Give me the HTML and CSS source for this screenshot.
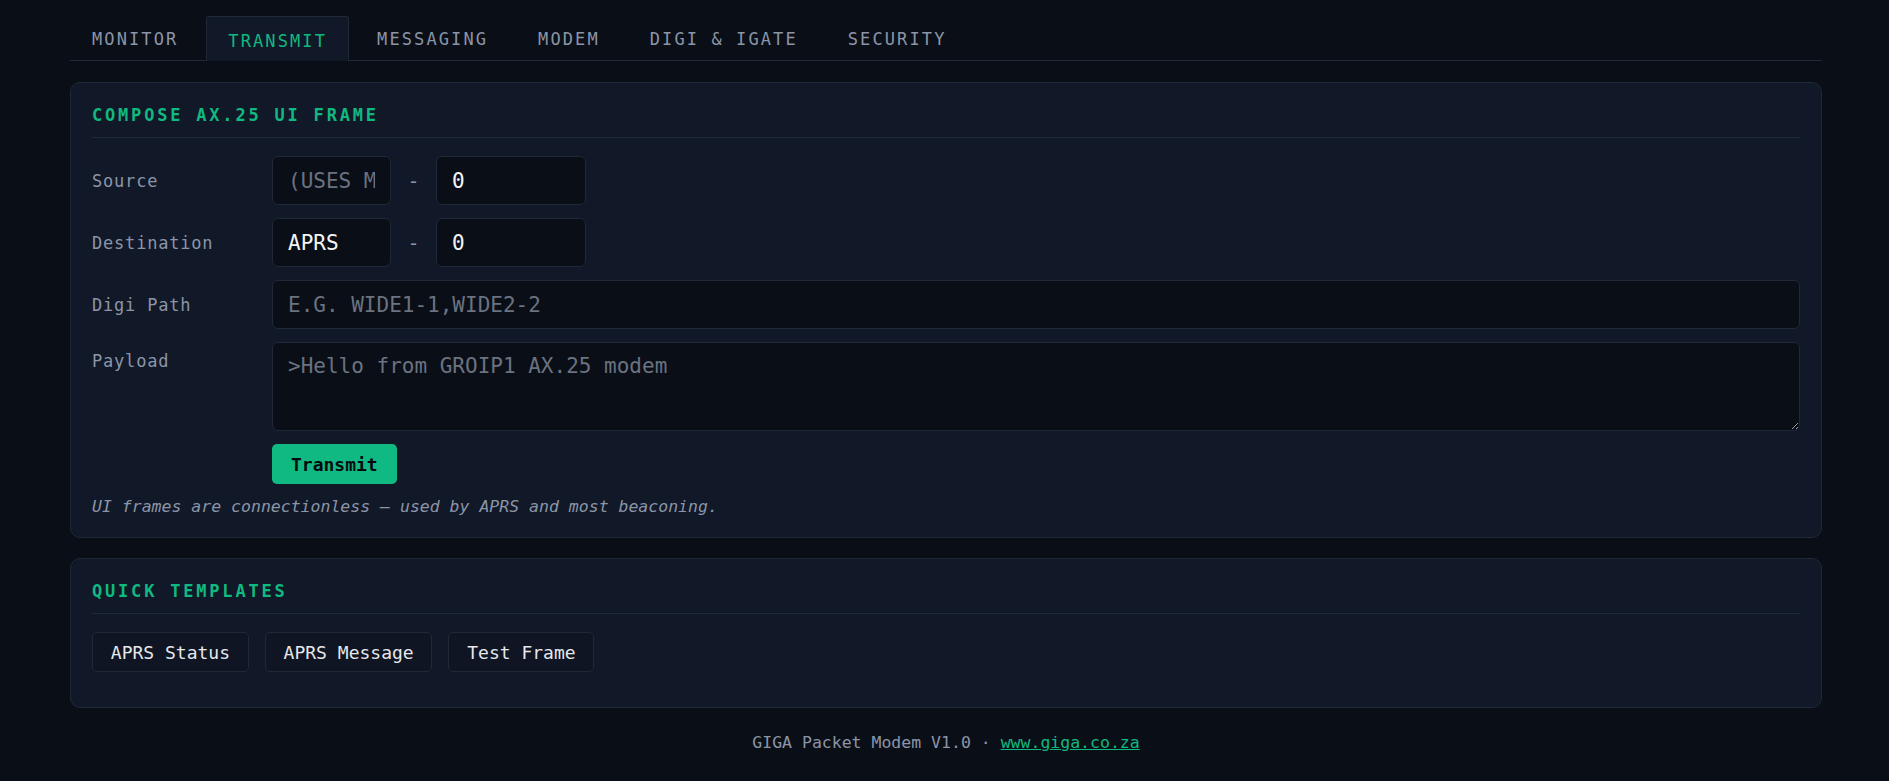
FILE: index.html
```html
<!DOCTYPE html>
<html lang="en">
<head>
    <meta charset="UTF-8">
    <meta name="viewport" content="width=device-width, initial-scale=1.0">
    <title>GIGA Packet Modem - Transmit</title>
    <link rel="stylesheet" href="styles.css">
</head>
<body>
<div class="app">
    <nav class="tabs">
        <a class="tab" href="#">MONITOR</a>
        <a class="tab active" href="#">TRANSMIT</a>
        <a class="tab" href="#">MESSAGING</a>
        <a class="tab" href="#">MODEM</a>
        <a class="tab" href="#">DIGI &amp; IGATE</a>
        <a class="tab" href="#">SECURITY</a>
    </nav>

    <section class="card">
        <h2 class="card-title">COMPOSE AX.25 UI FRAME</h2>
        <form class="form" onsubmit="return false">
            <div class="row">
                <label for="src">Source</label>
                <input id="src" class="call" type="text" placeholder="(uses my call)">
                <span class="dash">-</span>
                <input class="ssid" type="text" value="0">
            </div>
            <div class="row">
                <label for="dst">Destination</label>
                <input id="dst" class="call" type="text" value="APRS">
                <span class="dash">-</span>
                <input class="ssid" type="text" value="0">
            </div>
            <div class="row">
                <label for="path">Digi Path</label>
                <input id="path" class="wide" type="text" placeholder="e.g. WIDE1-1,WIDE2-2">
            </div>
            <div class="row top">
                <label for="payload">Payload</label>
                <textarea id="payload" class="wide" placeholder="&gt;Hello from GROIP1 AX.25 modem"></textarea>
            </div>
            <button class="btn-primary" type="submit">Transmit</button>
            <p class="note">UI frames are connectionless — used by APRS and most beaconing.</p>
        </form>
    </section>

    <section class="card">
        <h2 class="card-title">QUICK TEMPLATES</h2>
        <div class="templates">
            <button class="tpl" type="button">APRS Status</button>
            <button class="tpl" type="button">APRS Message</button>
            <button class="tpl" type="button">Test Frame</button>
        </div>
    </section>

    <footer class="foot">
        GIGA Packet Modem V1.0 · <a href="#">www.giga.co.za</a>
    </footer>
</div>
</body>
</html>
```

FILE: styles.css
```css
body {
    margin: 0;
    background: #0a0e17;
    color: #e5e7eb;
    font-family: "DejaVu Sans Mono", monospace;
}
.app {
    padding: 16px 67px 20px 70px;
}

/* tab strip */
.tabs {
    display: flex;
    gap: 6px;
    border-bottom: 1px solid #1f2937;
}
.tab {
    display: block;
    padding: 12px 21px;
    margin-bottom: -1px;
    line-height: 20px;
    font-size: 17px;
    letter-spacing: 2.1px;
    color: #8b95a7;
    text-decoration: none;
    border: 1px solid transparent;
    border-bottom: none;
    border-radius: 3px 3px 0 0;
}
.tab.active {
    padding-top: 14px;
    padding-bottom: 10px;
    background: #111827;
    border-color: #1f2937;
    color: #10b981;
}

/* cards */
.card {
    background: #111827;
    border: 1px solid #1f2937;
    border-radius: 10px;
    padding: 22px 21px 21px;
    margin-top: 21px;
}
.card + .card { margin-top: 20px; }
.card-title {
    margin: 0 0 18px;
    padding-bottom: 12px;
    border-bottom: 1px solid #1f2937;
    font-size: 17px;
    line-height: 20px;
    letter-spacing: 2.8px;
    color: #10b981;
}

/* compose form */
.form {
    display: flex;
    flex-direction: column;
    gap: 13px;
}
.row {
    display: flex;
    align-items: center;
}
.row.top { align-items: flex-start; }
.row label {
    width: 180px;
    flex-shrink: 0;
    font-size: 17px;
    letter-spacing: 0.8px;
    color: #8b95a7;
}
.row.top label { padding-top: 9px; }
input, textarea {
    box-sizing: border-box;
    height: 49px;
    padding: 0 15px;
    background: #0a0e17;
    border: 1px solid #1f2937;
    border-radius: 6px;
    color: #f3f4f6;
    font-family: "DejaVu Sans Mono", monospace;
    font-size: 21px;
    text-transform: uppercase;
    outline: none;
}
input::placeholder, textarea::placeholder {
    color: #6b7280;
}
textarea {
    height: 89px;
    padding: 11px 15px;
    text-transform: none;
    resize: vertical;
}
.call { width: 119px; }
.ssid { width: 150px; }
.wide { flex: 1; }
.dash {
    margin: 0 16.5px;
    font-size: 20px;
    color: #8b95a7;
}
.btn-primary {
    align-self: flex-start;
    margin-left: 180px;
    height: 40px;
    padding: 0 19px;
    background: #10b981;
    color: #050a0f;
    border: none;
    border-radius: 5px;
    font-family: "DejaVu Sans Mono", monospace;
    font-size: 18px;
    font-weight: bold;
    cursor: pointer;
}
.note {
    margin: 0;
    font-size: 16.5px;
    font-style: italic;
    color: #8b95a7;
}

/* quick templates */
.templates {
    display: flex;
    gap: 16px;
    margin-bottom: 14px;
}
.tpl {
    height: 40px;
    padding: 0 17.8px;
    background: #0f1522;
    border: 1px solid #1f2937;
    border-radius: 5px;
    color: #e5e7eb;
    font-family: "DejaVu Sans Mono", monospace;
    font-size: 18px;
    cursor: pointer;
}

.foot {
    margin-top: 25px;
    text-align: center;
    font-size: 16.5px;
    color: #8b95a7;
}
.foot a { color: #10b981; }
```
